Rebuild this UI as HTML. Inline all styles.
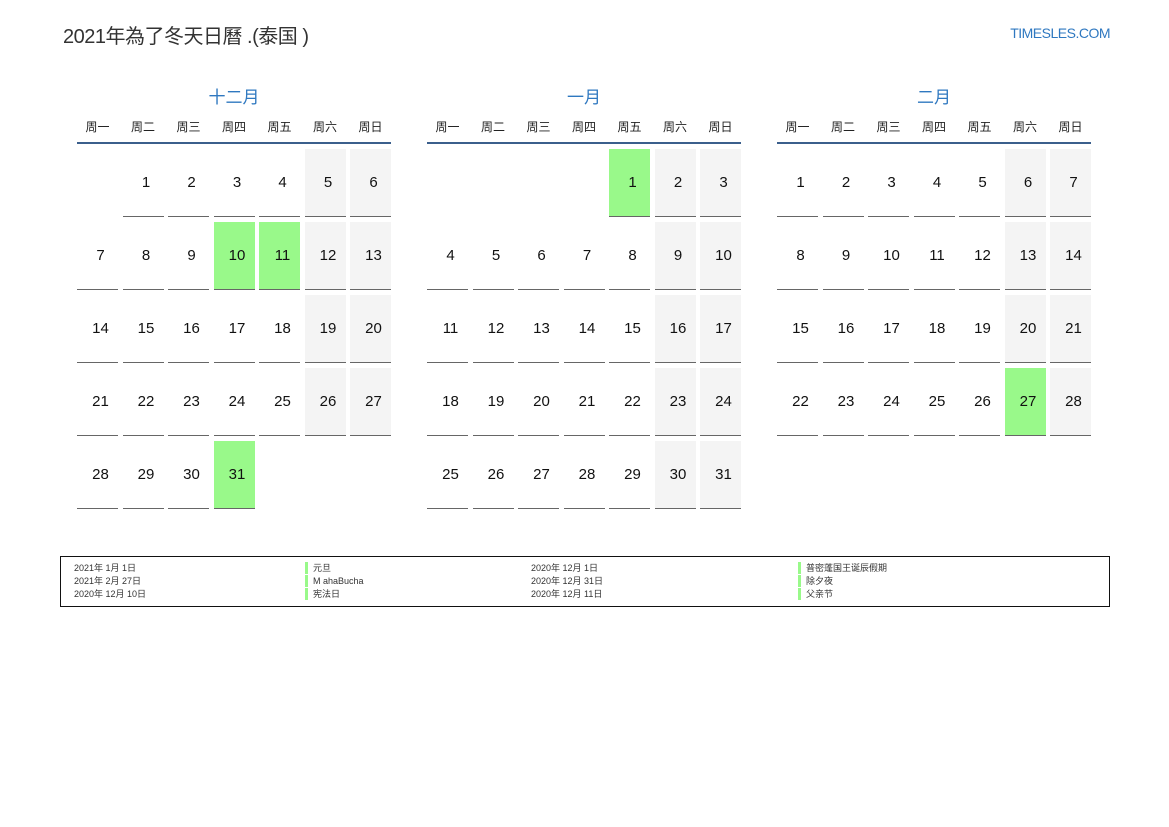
<!DOCTYPE html>
<html><head><meta charset="utf-8"><style>
*{margin:0;padding:0;box-sizing:border-box}
body{width:1169px;height:827px;background:#fff;position:relative;font-family:"Liberation Sans","Noto Sans CJK SC",sans-serif;color:#222;overflow:hidden}
.title{position:absolute;left:63px;top:20px;font-size:20px;color:#333;letter-spacing:-0.5px}
.site{position:absolute;right:59px;top:25px;font-size:14px;color:#2f78c0;letter-spacing:-0.5px}
.m{position:absolute;top:86px;width:314px}
.mt{text-align:center;font-size:17px;color:#2f78c0;height:24px;line-height:24px}
.wd{display:grid;grid-template-columns:repeat(7,41px);column-gap:4.5px;font-size:12px;text-align:center;margin-top:6px;height:28px;line-height:22px;border-bottom:2px solid #3b5f8c}
.g{display:grid;grid-template-columns:repeat(7,41px);column-gap:4.5px;row-gap:5px;margin-top:5px}
.g div{height:68px;line-height:68px;text-align:center;padding-left:6px;font-size:15px;color:#111;border-bottom:1.5px solid #666}
.g .w{background:#f4f4f4}
.g .h{background:#99f98a}
.g .e{border:none}
.leg{position:absolute;left:60px;top:556px;width:1050px;height:51px;border:1px solid #111;font-size:9px;color:#333}
.leg span{position:absolute;line-height:12px}
.b{border-left:3px solid #99f98a;padding-left:5px}
</style></head><body>
<div class="title">2021年為了冬天日曆 .(泰国 )</div>
<div class="site">TIMESLES.COM</div>

<div class="m" style="left:77px">
<div class="mt">十二月</div>
<div class="wd"><span>周一</span><span>周二</span><span>周三</span><span>周四</span><span>周五</span><span>周六</span><span>周日</span></div>
<div class="g">
<div class="e"></div><div>1</div><div>2</div><div>3</div><div>4</div><div class="w">5</div><div class="w">6</div>
<div>7</div><div>8</div><div>9</div><div class="h">10</div><div class="h">11</div><div class="w">12</div><div class="w">13</div>
<div>14</div><div>15</div><div>16</div><div>17</div><div>18</div><div class="w">19</div><div class="w">20</div>
<div>21</div><div>22</div><div>23</div><div>24</div><div>25</div><div class="w">26</div><div class="w">27</div>
<div>28</div><div>29</div><div>30</div><div class="h">31</div>
</div></div>

<div class="m" style="left:427px">
<div class="mt">一月</div>
<div class="wd"><span>周一</span><span>周二</span><span>周三</span><span>周四</span><span>周五</span><span>周六</span><span>周日</span></div>
<div class="g">
<div class="e"></div><div class="e"></div><div class="e"></div><div class="e"></div><div class="h">1</div><div class="w">2</div><div class="w">3</div>
<div>4</div><div>5</div><div>6</div><div>7</div><div>8</div><div class="w">9</div><div class="w">10</div>
<div>11</div><div>12</div><div>13</div><div>14</div><div>15</div><div class="w">16</div><div class="w">17</div>
<div>18</div><div>19</div><div>20</div><div>21</div><div>22</div><div class="w">23</div><div class="w">24</div>
<div>25</div><div>26</div><div>27</div><div>28</div><div>29</div><div class="w">30</div><div class="w">31</div>
</div></div>

<div class="m" style="left:777px">
<div class="mt">二月</div>
<div class="wd"><span>周一</span><span>周二</span><span>周三</span><span>周四</span><span>周五</span><span>周六</span><span>周日</span></div>
<div class="g">
<div>1</div><div>2</div><div>3</div><div>4</div><div>5</div><div class="w">6</div><div class="w">7</div>
<div>8</div><div>9</div><div>10</div><div>11</div><div>12</div><div class="w">13</div><div class="w">14</div>
<div>15</div><div>16</div><div>17</div><div>18</div><div>19</div><div class="w">20</div><div class="w">21</div>
<div>22</div><div>23</div><div>24</div><div>25</div><div>26</div><div class="h">27</div><div class="w">28</div>
</div></div>

<div class="leg">
<span style="left:13px;top:5px">2021年 1月 1日</span>
<span style="left:13px;top:18px">2021年 2月 27日</span>
<span style="left:13px;top:31px">2020年 12月 10日</span>
<span class="b" style="left:244px;top:5px">元旦</span>
<span class="b" style="left:244px;top:18px">M ahaBucha</span>
<span class="b" style="left:244px;top:31px">宪法日</span>
<span style="left:470px;top:5px">2020年 12月 1日</span>
<span style="left:470px;top:18px">2020年 12月 31日</span>
<span style="left:470px;top:31px">2020年 12月 11日</span>
<span class="b" style="left:737px;top:5px">普密蓬国王诞辰假期</span>
<span class="b" style="left:737px;top:18px">除夕夜</span>
<span class="b" style="left:737px;top:31px">父亲节</span>
</div>
</body></html>
